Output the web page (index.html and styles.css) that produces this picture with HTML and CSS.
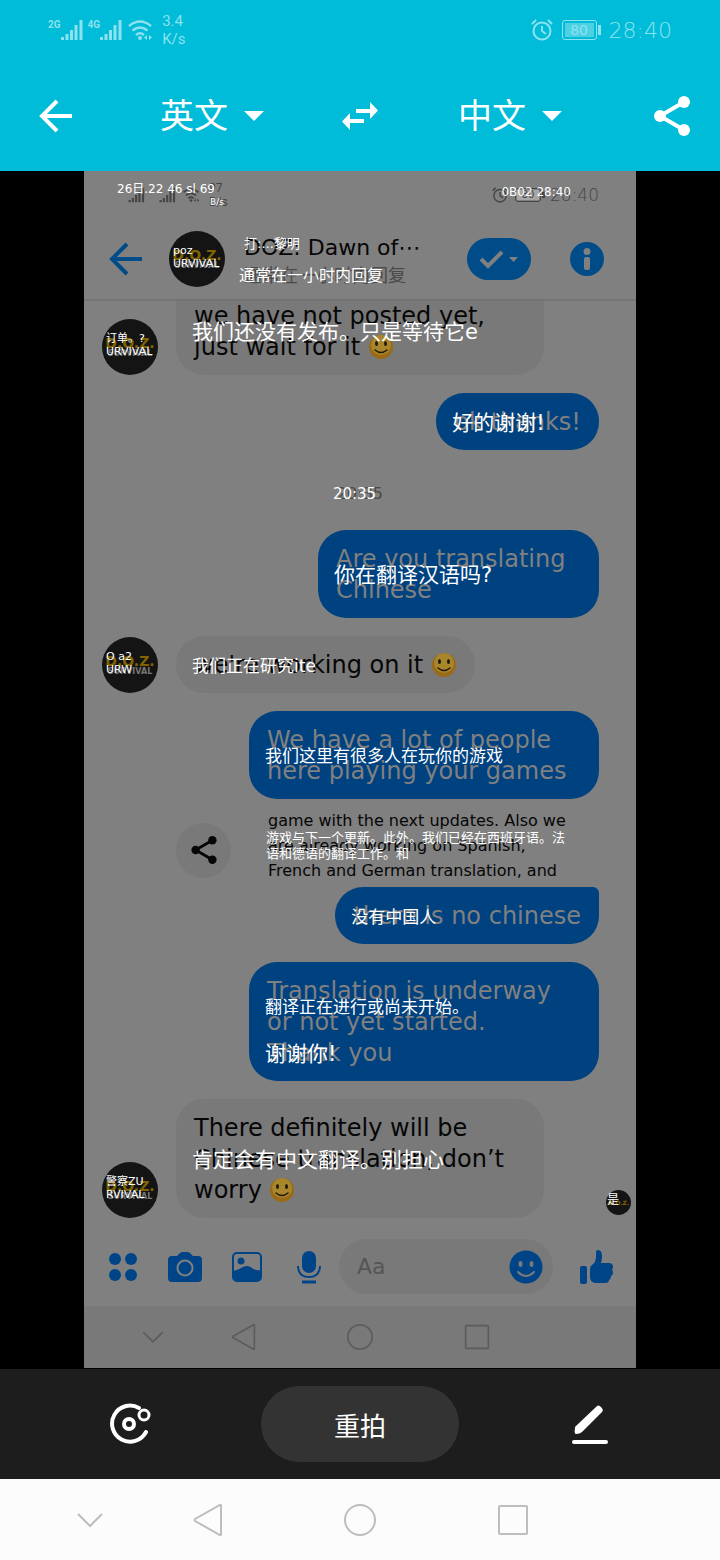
FILE: index.html
```html
<!DOCTYPE html>
<html lang="zh-CN">

<head>
    <meta charset="UTF-8">
    <meta name="viewport" content="width=device-width, initial-scale=1.0">
    <link rel="stylesheet" href="styles.css">
    <title>拍照翻译</title>
</head>

<body>
    <!-- shared icons -->
    <svg class="sprite" aria-hidden="true">
        <symbol id="bars" viewBox="0 0 22 22">
            <path d="M1.500 18v3M6 15v6M10.500 11v10M15 6v15M20 1v20" stroke="currentColor" stroke-width="3" />
        </symbol>
        <symbol id="wifi" viewBox="0 0 26 22">
            <path d="M2 7q11-9 22 0M5.500 11.500q7.500-6 15 0M9 16q4-3.500 8 0" fill="none" stroke="currentColor" stroke-width="2.500" />
            <circle cx="13" cy="19" r="2" fill="currentColor" />
            <path d="M20 16v5l-3-2.500zM22 16v5l3-2.500z" fill="currentColor" />
        </symbol>
        <symbol id="alarm" viewBox="0 0 22 22">
            <circle cx="11" cy="12" r="8.500" fill="none" stroke="currentColor" stroke-width="2" />
            <path d="M11 7v5l4 3M1 5l4-4M21 5l-4-4" fill="none" stroke="currentColor" stroke-width="2" />
        </symbol>
        <symbol id="arrow" viewBox="0 0 34 34">
            <path d="M33 17H3M18 2L3 17l15 15" fill="none" stroke="currentColor" stroke-width="4" />
        </symbol>
        <symbol id="share" viewBox="0 0 36 40">
            <path d="M30 6L6 20l24 14" fill="none" stroke="currentColor" stroke-width="4" />
            <circle cx="30" cy="6" r="6" fill="currentColor" />
            <circle cx="6" cy="20" r="6" fill="currentColor" />
            <circle cx="30" cy="34" r="6" fill="currentColor" />
        </symbol>
        <symbol id="smile" viewBox="0 0 26 26">
            <circle cx="13" cy="13" r="12" fill="#9a6a18" />
            <circle cx="13" cy="11" r="10" fill="#a8862c" />
            <ellipse cx="8.500" cy="9.500" rx="1.500" ry="2.500" fill="#221a08" />
            <ellipse cx="17.500" cy="9.500" rx="1.500" ry="2.500" fill="#221a08" />
            <path d="M7 16q6 5 12 0" fill="none" stroke="#221a08" stroke-width="1.500" stroke-linecap="round" />
        </symbol>
        <symbol id="nav-down" viewBox="0 0 32 32">
            <path d="M4 10l12 12 12-12" fill="none" stroke="currentColor" stroke-width="2" />
        </symbol>
        <symbol id="nav-back" viewBox="0 0 32 32">
            <path d="M30 1.500v29q0 1-1 .5L4 17q-1-1 0-2L29 1q1-.5 1 .5z" fill="none" stroke="currentColor" stroke-width="2" />
        </symbol>
        <symbol id="nav-home" viewBox="0 0 32 32">
            <circle cx="16" cy="16" r="15" fill="none" stroke="currentColor" stroke-width="2" />
        </symbol>
        <symbol id="nav-recent" viewBox="0 0 32 32">
            <rect x="2" y="2" width="28" height="28" rx="1" fill="none" stroke="currentColor" stroke-width="2" />
        </symbol>
    </svg>

    <header class="top">
        <div class="status">
            <div class="signal"><small>2G</small><svg><use href="#bars" /></svg></div>
            <div class="signal"><small>4G</small><svg><use href="#bars" /></svg></div>
            <svg class="wifi"><use href="#wifi" /></svg>
            <div class="speed">3.4<br>K/s</div>
            <svg class="alarm"><use href="#alarm" /></svg>
            <div class="battery"><span>80</span></div>
            <time>28:40</time>
        </div>
        <div class="langbar">
            <button class="icon-button" aria-label="返回"><svg width="34" height="34"><use href="#arrow" /></svg></button>
            <label class="lang">
                <select aria-label="源语言">
                    <option>英文</option>
                </select>
                <svg width="20" height="10" viewBox="0 0 20 10"><path d="M0 0h20L10 10z" fill="#fff" /></svg>
            </label>
            <button class="icon-button" aria-label="交换语言">
                <svg width="36" height="28" viewBox="0 0 36 28">
                    <path d="M14 7h14V0l8 8.500-8 8.500v-6H14zM22 17H8v-6L0 19.500 8 28v-7h14z" fill="#fff" />
                </svg>
            </button>
            <label class="lang">
                <select aria-label="目标语言">
                    <option>中文</option>
                </select>
                <svg width="20" height="10" viewBox="0 0 20 10"><path d="M0 0h20L10 10z" fill="#fff" /></svg>
            </label>
            <button class="icon-button share" aria-label="分享"><svg width="36" height="40"><use href="#share" /></svg></button>
        </div>
    </header>

    <main class="stage">
        <div class="photo">
            <div class="photo-status">
                <svg class="bars"><use href="#bars" /></svg>
                <svg class="bars"><use href="#bars" /></svg>
                <svg class="wifi"><use href="#wifi" /></svg>
                <div class="speed">97<br>B/s</div>
                <svg class="alarm"><use href="#alarm" /></svg>
                <div class="battery"><span>80</span></div>
                <time>28:40</time>
                <span class="zh status-left">26日.22 46 sl 69</span>
                <span class="zh status-speed">B/s</span>
                <span class="zh status-right">0B02 28:40</span>
            </div>

            <div class="chat-head">
                <svg class="back" width="34" height="34"><use href="#arrow" /></svg>
                <div class="avatar"><b>D.O.Z.</b><i>SURVIVAL</i><span class="zh">poz<br>URVIVAL</span></div>
                <div class="who">
                    <h1>DOZ: Dawn of⋯<span class="zh">打:...黎明</span></h1>
                    <p>通常在一小时内回复<span class="zh">通常在一小时内回复</span></p>
                </div>
                <button class="done" aria-label="完成">
                    <svg width="64" height="42" viewBox="0 0 64 42">
                        <path d="M14 21l7 7 14-14" fill="none" stroke="#808080" stroke-width="4" />
                        <path d="M42 19h9l-4.500 5z" fill="#808080" />
                    </svg>
                </button>
                <button class="info" aria-label="信息">
                    <svg width="34" height="34" viewBox="0 0 34 34">
                        <circle cx="17" cy="17" r="17" fill="#004c88" />
                        <circle cx="17" cy="9.500" r="3.500" fill="#808080" />
                        <rect x="14" y="15" width="6" height="13" rx="2" fill="#808080" />
                    </svg>
                </button>
            </div>

            <div class="chat">
                <div class="row">
                    <div class="avatar"><b>D.O.Z.</b><i>SURVIVAL</i><span class="zh">订单。?<br>URVIVAL</span></div>
                    <p class="bubble wide cut"><span class="line">we have not posted yet,<br>just wait for it <svg class="emoji"><use href="#smile" /></svg><span class="zh">我们还没有发布。只是等待它e</span></span></p>
                </div>
                <div class="row mine">
                    <p class="bubble"><span class="line">ok thanks!<span class="zh">好的谢谢!</span></span></p>
                </div>
                <div class="stamp"><span class="line">20:35<span class="zh">20:35</span></span></div>
                <div class="row mine">
                    <p class="bubble half"><span class="line">Are you translating<br>Chinese<span class="zh">你在翻译汉语吗?</span></span></p>
                </div>
                <div class="row">
                    <div class="avatar"><b>D.O.Z.</b><i>SURVIVAL</i><span class="zh">O a2<br>URW</span></div>
                    <p class="bubble"><span class="line">we're working on it <svg class="emoji"><use href="#smile" /></svg><span class="zh mid">我们正在研究ite</span></span></p>
                </div>
                <div class="row mine">
                    <p class="bubble long"><span class="line">We have a lot of people<br>here playing your games<span class="zh mid">我们这里有很多人在玩你的游戏</span></span></p>
                </div>
                <div class="preview">
                    <button class="share-round" aria-label="分享"><svg width="26" height="28"><use href="#share" /></svg></button>
                    <p class="line">game with the next updates. Also we<br>are already working on Spanish,<br>French and German translation, and<span class="zh small">游戏与下一个更新。此外。我们已经在西班牙语。法<br>语和德语的翻译工作。和</span></p>
                </div>
                <div class="row mine">
                    <p class="bubble joined"><span class="line">there is no chinese<span class="zh mid">没有中国人</span></span></p>
                </div>
                <div class="row mine">
                    <p class="bubble long"><span class="line">Translation is underway<br>or not yet started.<span class="zh mid">翻译正在进行或尚未开始。</span></span><span class="line">Thank you<span class="zh">谢谢你!</span></span></p>
                </div>
                <div class="row">
                    <div class="avatar"><b>D.O.Z.</b><i>SURVIVAL</i><span class="zh">警察ZU<br>RVIVAL</span></div>
                    <p class="bubble wide"><span class="line">There definitely will be<br>Chinese translation, don’t<br>worry <svg class="emoji"><use href="#smile" /></svg><span class="zh">肯定会有中文翻译。别担心</span></span></p>
                    <div class="avatar seen"><b>D.O.Z.</b><span class="zh">是</span></div>
                </div>
            </div>

            <div class="composer">
                <button aria-label="更多">
                    <svg width="36" height="36" viewBox="0 0 36 36" fill="currentColor">
                        <circle cx="10" cy="10" r="6" /><circle cx="26" cy="10" r="6" />
                        <circle cx="10" cy="26" r="6" /><circle cx="26" cy="26" r="6" />
                    </svg>
                </button>
                <button aria-label="相机">
                    <svg width="36" height="36" viewBox="0 0 36 36">
                        <path d="M5 7h5l3-3q1-1 3-1h4q2 0 3 1l3 3h5q4 0 4 4v18q0 4-4 4H5q-4 0-4-4V11q0-4 4-4z" fill="currentColor" />
                        <circle cx="18" cy="19" r="7.500" fill="none" stroke="#808080" stroke-width="2" />
                    </svg>
                </button>
                <button aria-label="图片">
                    <svg width="36" height="36" viewBox="0 0 36 36">
                        <rect x="4" y="4" width="28" height="28" rx="4" fill="none" stroke="currentColor" stroke-width="2" />
                        <circle cx="12" cy="12" r="3.500" fill="currentColor" />
                        <path d="M4 22q5-1 8-3 6-4 11 0 4 3 9 2v8q0 3-4 3H8q-4 0-4-4z" fill="currentColor" />
                    </svg>
                </button>
                <button aria-label="语音">
                    <svg width="36" height="36" viewBox="0 0 36 36">
                        <rect x="11" y="2" width="14" height="22" rx="7" fill="currentColor" />
                        <path d="M7 17v1q1 10 11 10t11-10v-1" fill="none" stroke="currentColor" stroke-width="2" />
                        <path d="M11 33h14" stroke="currentColor" stroke-width="3" />
                    </svg>
                </button>
                <div class="field">
                    <input type="text" placeholder="Aa" aria-label="消息">
                    <button aria-label="表情">
                        <svg width="34" height="34" viewBox="0 0 34 34">
                            <circle cx="17" cy="17" r="16.500" fill="currentColor" />
                            <ellipse cx="11.500" cy="14" rx="2" ry="3" fill="#797979" />
                            <ellipse cx="22.500" cy="14" rx="2" ry="3" fill="#797979" />
                            <path d="M9 22q8 8 16 0" fill="none" stroke="#797979" stroke-width="2" stroke-linecap="round" />
                        </svg>
                    </button>
                </div>
                <button class="like" aria-label="赞">
                    <svg width="36" height="36" viewBox="0 0 36 36" fill="currentColor">
                        <rect x="2" y="17" width="7" height="18" rx="2" />
                        <path d="M12 20q0-3 2-4 4-3 4-8V3q0-2 2-2 4 0 4 6 0 4-1 7h8q4 0 4 4 0 2-1 3 1 1 1 3t-2 3q0 3-2 4 0 3-4 3H17q-5-1-5-6z" />
                    </svg>
                </button>
            </div>

            <div class="sysnav">
                <svg><use href="#nav-down" /></svg>
                <svg><use href="#nav-back" /></svg>
                <svg><use href="#nav-home" /></svg>
                <svg><use href="#nav-recent" /></svg>
            </div>
        </div>
    </main>

    <footer class="tools">
        <button class="icon-button" aria-label="涂抹">
            <svg width="44" height="44" viewBox="0 0 44 44" fill="none" stroke="#fff" stroke-width="4">
                <path d="M30 6A18 18 0 1 0 37 30" stroke-linecap="round" />
                <circle cx="20" cy="22" r="5" />
                <circle cx="35" cy="13" r="5" stroke-width="3" />
            </svg>
        </button>
        <button class="retake">重拍</button>
        <button class="icon-button" aria-label="编辑">
            <svg width="38" height="40" viewBox="0 0 38 40">
                <path d="M25 3q2-3 5 0t1 5L11 28q-2 2-6 2-2 0-1-6 0-2 2-3z" fill="#fff" />
                <path d="M3 38h32" stroke="#fff" stroke-width="4" stroke-linecap="round" />
            </svg>
        </button>
    </footer>

    <nav class="sysnav device">
        <button aria-label="收起"><svg><use href="#nav-down" /></svg></button>
        <button aria-label="返回"><svg><use href="#nav-back" /></svg></button>
        <button aria-label="主页"><svg><use href="#nav-home" /></svg></button>
        <button aria-label="最近"><svg><use href="#nav-recent" /></svg></button>
    </nav>
</body>

</html>
```
FILE: styles.css
```css
* {
    box-sizing: border-box;
}

body {
    margin: 0;
    min-height: 100vh;
    display: flex;
    flex-direction: column;
    background: #000;
    font-family: "DejaVu Sans", "Noto Sans CJK SC", sans-serif;
}

h1, p {
    margin: 0;
    font-weight: 400;
}

button {
    padding: 0;
    border: 0;
    background: none;
    color: inherit;
    font: inherit;
}

svg {
    display: block;
}

.sprite {
    position: absolute;
    width: 0;
    height: 0;
}

/* top bar */
.top {
    background: #00bcd8;
    color: #fff;
}

.status {
    display: flex;
    align-items: center;
    height: 60px;
    padding: 0 48px;
    color: #8ce2ee;
}

.signal {
    display: flex;
    align-items: flex-start;
    margin-right: 5px;
}

.signal small {
    font: bold 10px/12px Roboto, sans-serif;
}

.signal svg {
    width: 22px;
    height: 22px;
}

.wifi {
    width: 26px;
    height: 22px;
}

.speed {
    margin-left: 9px;
    margin-right: auto;
    font: 15px/18px Roboto, sans-serif;
}

.alarm {
    width: 22px;
    height: 22px;
}

.battery {
    position: relative;
    width: 35px;
    height: 20px;
    margin: 0 12px 0 9px;
    padding: 2px;
    border: 1px solid currentColor;
    border-radius: 3px;
    font-size: 14px;
    line-height: 14px;
    text-align: center;
}

.battery::after {
    content: "";
    position: absolute;
    right: -5px;
    top: 4px;
    width: 3px;
    height: 10px;
    background: currentColor;
}

.battery span {
    display: block;
    background: rgba(255, 255, 255, 0.3);
}

.status time {
    font-size: 22px;
    font-weight: 300;
}

.langbar {
    display: grid;
    grid-template-columns: 112fr 200fr 96fr 204fr 108fr;
    align-items: center;
    justify-items: center;
    height: 111px;
}

.lang {
    display: flex;
    align-items: center;
    gap: 16px;
}

.lang select {
    appearance: none;
    padding: 0;
    border: 0;
    background: none;
    color: #fff;
    font: inherit;
    font-size: 34px;
}

.langbar .share {
    justify-self: end;
    margin-right: 30px;
}

/* photo with the translation over it */
.stage {
    flex: 1;
    padding: 0 84px;
}

.photo {
    background: #808080;
    color: #060606;
}

.line {
    display: block;
    position: relative;
}

.zh {
    position: absolute;
    left: -2px;
    top: 50%;
    transform: translateY(-50%);
    color: #fff;
    font-size: 21px;
    white-space: nowrap;
}

.zh.mid {
    font-size: 17px;
}

.zh.small {
    font-size: 13px;
    line-height: 16px;
}

.photo-status {
    position: relative;
    display: flex;
    align-items: center;
    height: 48px;
    padding: 0 37px 0 44px;
    color: #454545;
}

.photo-status .bars {
    width: 17px;
    height: 16px;
    margin-right: 14px;
}

.photo-status .wifi {
    width: 18px;
    height: 16px;
    margin-left: -8px;
}

.photo-status .speed {
    font-size: 12px;
    line-height: 14px;
}

.photo-status .alarm {
    width: 16px;
    height: 16px;
}

.photo-status .battery {
    width: 26px;
    height: 14px;
    margin: 0 9px 0 7px;
    padding: 1px;
    font-size: 10px;
    line-height: 10px;
}

.photo-status .battery::after {
    top: 3px;
    height: 6px;
}

.photo-status time {
    font-size: 17px;
    font-weight: 300;
}

.photo-status .zh {
    top: 16px;
    font-size: 12px;
}

.photo-status .status-left {
    left: 33px;
}

.photo-status .status-speed {
    left: 126px;
    top: 31px;
    font-size: 9px;
}

.photo-status .status-right {
    left: auto;
    right: 65px;
    top: 21px;
}

.chat-head {
    display: flex;
    align-items: center;
    height: 82px;
    padding: 0 32px 0 25px;
    border-bottom: 2px solid #747474;
}

.back {
    margin-right: 26px;
    color: #004c88;
}

.avatar {
    position: relative;
    flex: none;
    display: flex;
    flex-direction: column;
    align-items: center;
    justify-content: center;
    width: 56px;
    height: 56px;
    border-radius: 50%;
    background: #141414;
}

.avatar b {
    color: #806400;
    font: bold 14px/14px "DejaVu Sans", sans-serif;
}

.avatar i {
    color: #777;
    font: bold 8px/8px "DejaVu Sans", sans-serif;
}

.avatar .zh {
    left: 4px;
    top: 26px;
    font-size: 11px;
    line-height: 13px;
}

.who {
    flex: 1;
    padding: 6px 0 0 19px;
    white-space: nowrap;
}

.who h1 {
    position: relative;
    font-size: 22px;
    line-height: 28px;
}

.who p {
    position: relative;
    color: #4a4a4a;
    font-size: 18px;
    line-height: 28px;
}

.who h1 .zh {
    left: 0;
    top: 10px;
    font-size: 13px;
}

.who p .zh {
    left: -5px;
    font-size: 16px;
}

.done {
    margin-right: 39px;
    border-radius: 21px;
    background: #004c88;
}

.chat {
    display: flex;
    flex-direction: column;
}

.row {
    display: flex;
    align-items: flex-end;
    gap: 18px;
    margin-bottom: 18px;
    padding-left: 18px;
}

.row:last-child {
    margin-bottom: 0;
}

.row.mine {
    justify-content: flex-end;
    padding-right: 37px;
}

.bubble {
    padding: 14px 18px 12px;
    border-radius: 28px;
    background: #797979;
    font-size: 24px;
    line-height: 31px;
    white-space: nowrap;
}

.bubble.wide {
    flex: 0 1 368px;
}

.bubble.long {
    flex: 0 1 350px;
}

.bubble.half {
    flex: 0 1 281px;
}

.bubble.cut {
    padding-top: 0;
    border-radius: 0 0 28px 28px;
}

.mine .bubble {
    background: #004280;
    color: #808080;
}

.mine .bubble.joined {
    border-top-right-radius: 6px;
}

.emoji {
    display: inline-block;
    width: 26px;
    height: 26px;
    vertical-align: -5px;
}

.seen {
    width: 25px;
    height: 25px;
    margin: 0 5px 3px auto;
}

.seen b {
    font-size: 6px;
    line-height: 8px;
}

.seen .zh {
    left: 1px;
    top: 10px;
    font-size: 12px;
}

.stamp {
    display: flex;
    justify-content: center;
    align-items: flex-start;
    height: 80px;
    margin-top: -18px;
    padding-top: 28px;
    color: #4a4a4a;
    font-size: 16px;
    line-height: 31px;
}

.stamp .zh {
    left: -4px;
    font-size: 15px;
}

.preview {
    display: flex;
    align-items: center;
    gap: 37px;
    height: 88px;
    margin-top: -18px;
    padding: 5px 0 0 92px;
    font-size: 16px;
    line-height: 25px;
    white-space: nowrap;
}

.share-round {
    display: grid;
    place-items: center;
    width: 55px;
    height: 55px;
    margin-top: 9px;
    border-radius: 50%;
    background: #797979;
}

.composer {
    display: flex;
    align-items: center;
    height: 88px;
    padding: 9px 22px 0 21px;
    color: #004488;
}

.composer > button {
    flex: none;
    margin-right: 26px;
}

.composer > button:nth-of-type(4) {
    margin-right: 12px;
}

.field {
    flex: 1;
    display: flex;
    align-items: center;
    height: 55px;
    min-width: 0;
    padding: 0 10px 0 18px;
    border-radius: 28px;
    background: #797979;
}

.field input {
    flex: 1;
    min-width: 0;
    padding: 0;
    border: 0;
    background: none;
    font: inherit;
    font-size: 22px;
}

.field input::placeholder {
    color: #555;
    opacity: 1;
}

.composer > button.like {
    margin: 0 0 0 25px;
}

.sysnav {
    display: grid;
    grid-template-columns: 50fr 15fr 70fr 15fr 50fr;
    align-items: center;
    justify-items: center;
    height: 62px;
    background: #797979;
    color: #5c5c5c;
}

.sysnav svg {
    width: 26px;
    height: 26px;
}

/* bottom tools */
.tools {
    display: grid;
    grid-template-columns: 1fr 198px 1fr;
    align-items: center;
    justify-items: center;
    height: 110px;
    background: #1d1d1d;
    color: #fff;
}

.retake {
    width: 100%;
    height: 76px;
    border-radius: 38px;
    background: #333;
    font-size: 26px;
}

.device {
    height: 81px;
    background: #fcfcfc;
    color: #bdbdbd;
}

.device svg {
    width: 32px;
    height: 32px;
}
```
